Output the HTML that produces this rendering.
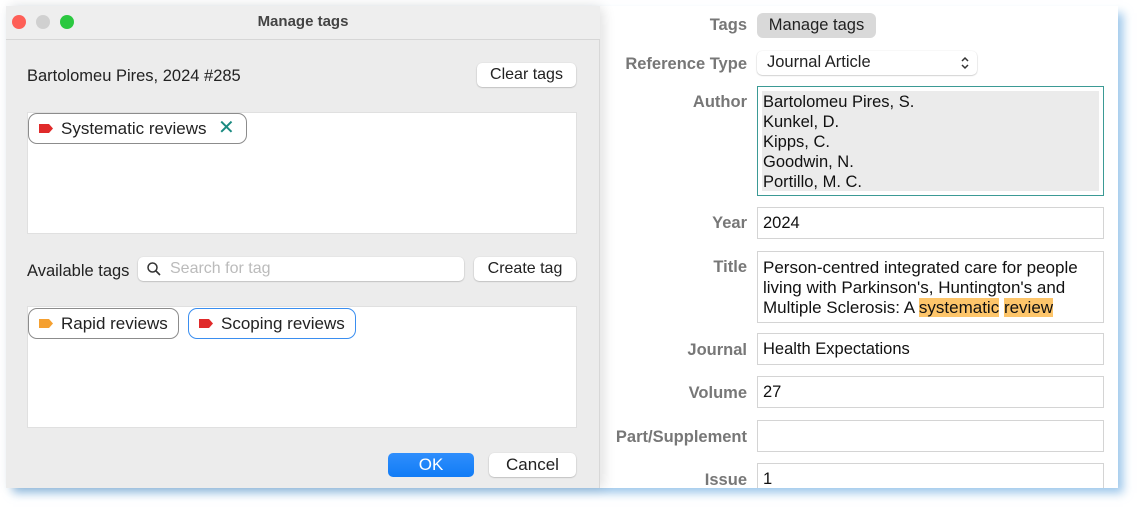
<!DOCTYPE html>
<html><head><style>
*{box-sizing:border-box;margin:0;padding:0}
body{width:1137px;height:507px;background:#fff;position:relative;overflow:hidden;font-family:"Liberation Sans",sans-serif;font-size:16px;color:#222}
.abs{position:absolute}
.shadow{left:8px;top:8px;width:1110px;height:480px;box-shadow:5px 5px 9px rgba(90,160,220,.6);background:#fff}
.panel{left:6px;top:6px;width:1112px;height:482px;background:#fff;overflow:hidden}
.dlg{left:6px;top:6px;width:594px;height:482px;background:#ececec;border-right:1px solid #d8d8d8;box-shadow:4px 0 12px rgba(0,0,0,.12);border-top-right-radius:10px}
.title{left:0;top:0;width:594px;height:34px;border-bottom:1px solid #d6d6d6;background:#eeeeee;text-align:center;line-height:31px;font-weight:bold;color:#444;font-size:15px}
.dot{width:14px;height:14px;border-radius:50%;top:9px}
.btn{background:#fff;border-radius:5px;box-shadow:0 0.5px 1.5px rgba(0,0,0,.3);text-align:center;font-size:16px;color:#222}
.box{background:#fff;border:1px solid #e0e0e0}
.tag{border:1.5px solid #8c8c8c;border-radius:9px;background:#fff;height:31px;line-height:29px;font-size:17px;padding-left:32px}
.flag{position:absolute;left:10px;top:10px;width:14px;height:9px}
.lbl{right:390px;width:200px;text-align:right;font-weight:bold;color:#777;font-size:16.5px}
.fld{left:757px;width:347px;border:1.5px solid #d4d4d4;background:#fff;padding-left:5px;font-size:16.5px;color:#111}
</style></head><body>
<div class="abs shadow"></div>
<div class="abs panel"></div>

<!-- right panel -->
<div class="abs lbl" style="top:16px">Tags</div>
<div class="abs" style="left:757px;top:13px;width:119px;height:25px;background:#d9d9d9;border-radius:6px;text-align:center;line-height:25px;color:#222;font-size:16.5px">Manage tags</div>
<div class="abs lbl" style="top:55px">Reference Type</div>
<div class="abs btn" style="left:757px;top:51px;width:220px;height:24px;line-height:23px;text-align:left;padding-left:10px;font-size:16.5px">Journal Article<svg class="abs" style="right:7px;top:5px" width="10" height="14" viewBox="0 0 10 14"><path d="M2 5L5 2L8 5M2 9L5 12L8 9" fill="none" stroke="#333" stroke-width="1.5"/></svg></div>
<div class="abs lbl" style="top:93px">Author</div>
<div class="abs" style="left:757px;top:86px;width:347px;height:110px;border:1.5px solid #3b9a95;background:#fff;padding:4px"><div style="background:#ebebeb;height:100px;padding-left:1px;padding-top:1px;line-height:20px;color:#111;font-size:16.5px">Bartolomeu Pires, S.<br>Kunkel, D.<br>Kipps, C.<br>Goodwin, N.<br>Portillo, M. C.</div></div>
<div class="abs lbl" style="top:214px">Year</div>
<div class="abs fld" style="top:207px;height:32px;line-height:31px">2024</div>
<div class="abs lbl" style="top:258px">Title</div>
<div class="abs fld" style="top:251px;height:72px;line-height:20px;padding-top:6px;font-size:17px;padding-right:20px">Person-centred integrated care for people living with Parkinson's, Huntington's and Multiple Sclerosis: A <span style="background:#fdc56a">systematic</span> <span style="background:#fdc56a">review</span></div>
<div class="abs lbl" style="top:341px">Journal</div>
<div class="abs fld" style="top:333px;height:32px;line-height:31px">Health Expectations</div>
<div class="abs lbl" style="top:384px">Volume</div>
<div class="abs fld" style="top:376px;height:32px;line-height:31px">27</div>
<div class="abs lbl" style="top:428px">Part/Supplement</div>
<div class="abs fld" style="top:420px;height:32px"></div>
<div class="abs lbl" style="top:471px">Issue</div>
<div class="abs fld" style="top:463px;height:25px;line-height:31px;border-bottom:none">1</div>

<!-- dialog -->
<div class="abs dlg">
  <div class="abs title">Manage tags</div>
  <div class="abs dot" style="left:6px;background:#fe5f57"></div>
  <div class="abs dot" style="left:30px;background:#d0d0d0"></div>
  <div class="abs dot" style="left:54px;background:#2bc840"></div>
  <div class="abs" style="left:21px;top:61px;font-size:16.5px">Bartolomeu Pires, 2024 #285</div>
  <div class="abs btn" style="left:471px;top:57px;width:99px;height:24px;line-height:24px">Clear tags</div>
  <div class="abs box" style="left:21px;top:106px;width:550px;height:122px"></div>
  <div class="abs tag" style="left:22px;top:107px;width:219px"><svg class="flag" viewBox="0 0 14 9"><path d="M0 0H10L14 4.5L10 9H0Z" fill="#e02a2a"/></svg>Systematic reviews<span style="position:absolute;left:189px;top:0;color:#1a8a80;font-size:20px">✕</span></div>
  <div class="abs" style="left:21px;top:256px;font-size:16.5px">Available tags</div>
  <div class="abs btn" style="left:132px;top:251px;width:326px;height:24px;line-height:24px;text-align:left;padding-left:32px;color:#bbb"><svg class="abs" style="left:9px;top:5px" width="14" height="14" viewBox="0 0 14 14"><circle cx="5.5" cy="5.5" r="4.5" fill="none" stroke="#333" stroke-width="1.5"/><path d="M9 9L13 13" stroke="#333" stroke-width="1.6"/></svg>Search for tag</div>
  <div class="abs btn" style="left:468px;top:251px;width:102px;height:24px;line-height:24px">Create tag</div>
  <div class="abs box" style="left:21px;top:300px;width:550px;height:122px"></div>
  <div class="abs tag" style="left:22px;top:302px;width:151px"><svg class="flag" viewBox="0 0 14 9"><path d="M0 0H10L14 4.5L10 9H0Z" fill="#f5a030"/></svg>Rapid reviews</div>
  <div class="abs tag" style="left:182px;top:302px;width:168px;border-color:#3a8ef0"><svg class="flag" viewBox="0 0 14 9"><path d="M0 0H10L14 4.5L10 9H0Z" fill="#e02a2a"/></svg>Scoping reviews</div>
  <div class="abs" style="left:382px;top:447px;width:86px;height:24px;border-radius:5px;background:linear-gradient(#2f8efc,#117cf6);color:#fff;text-align:center;line-height:24px;font-size:17px">OK</div>
  <div class="abs btn" style="left:483px;top:447px;width:87px;height:24px;line-height:24px;font-size:17px">Cancel</div>
</div>
</body></html>
